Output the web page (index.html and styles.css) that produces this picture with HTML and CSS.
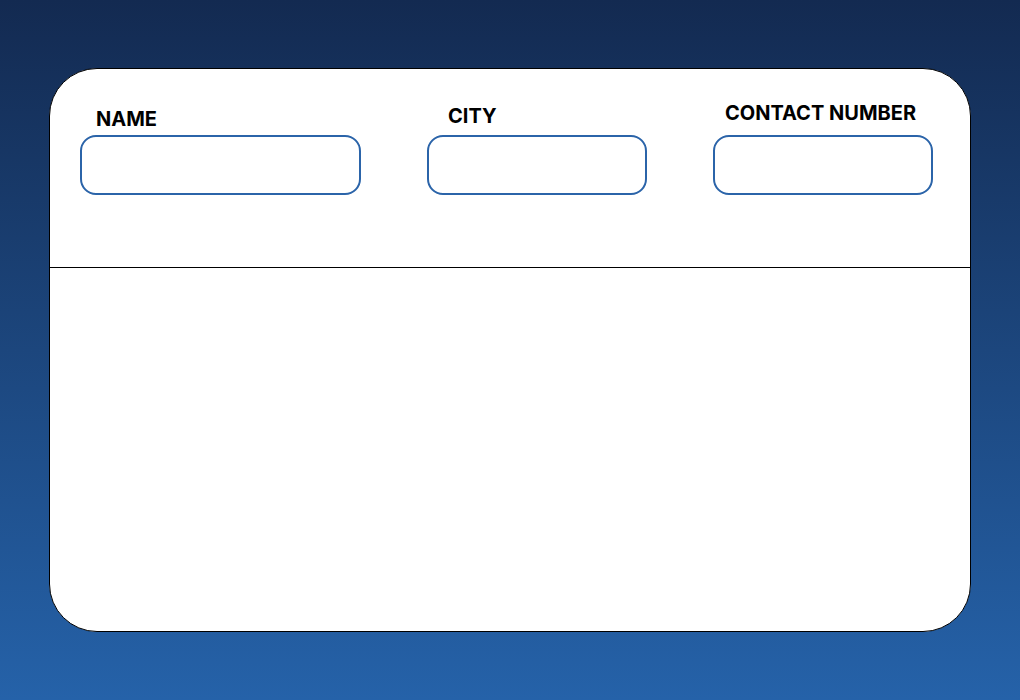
FILE: index.html
```html
<!DOCTYPE html>
<html>
<head>
<meta charset="utf-8">
<link rel="stylesheet" href="styles.css">
</head>
<body>
<div class="card">
  <div class="top">
    <div class="field field-name">
      <label class="label">NAME</label>
      <div class="input"></div>
    </div>
    <div class="field field-city">
      <label class="label">CITY</label>
      <div class="input"></div>
    </div>
    <div class="field field-contact">
      <label class="label">CONTACT NUMBER</label>
      <div class="input"></div>
    </div>
  </div>
  <div class="bottom"></div>
</div>
</body>
</html>
```
FILE: styles.css
```css
html, body {
  margin: 0;
  height: 100%;
}
body {
  box-sizing: border-box;
  padding: 68px 49px;
  background: linear-gradient(180deg, #132a51 0%, #2562a9 100%);
  font-family: Inter, "Noto Sans", sans-serif;
}
.card {
  height: 564px;
  box-sizing: border-box;
  background: #fff;
  border: 1px solid #000;
  border-radius: 48px;
  display: flex;
  flex-direction: column;
  overflow: hidden;
}
.top {
  height: 198px;
  border-bottom: 1px solid #000;
  display: flex;
  align-items: flex-start;
  gap: 66px;
  padding-left: 30px;
  box-sizing: content-box;
}
.field {
  display: flex;
  flex-direction: column;
}
.label {
  font-weight: 700;
  font-size: 20px;
  line-height: 20px;
  color: #000;
  letter-spacing: 0;
}
.input {
  box-sizing: border-box;
  height: 60px;
  border: 2px solid #2b64a9;
  border-radius: 16px;
  background: #fff;
}
.field-name { width: 281px; padding-top: 40px; }
.field-name .label { padding-left: 16px; margin-bottom: 6px; }
.field-city { width: 220px; padding-top: 37px; }
.field-city .label { padding-left: 21px; margin-bottom: 9px; }
.field-contact { width: 220px; padding-top: 34px; }
.field-contact .label { padding-left: 12px; margin-bottom: 12px; }
.bottom {
  flex: 1;
}
```
